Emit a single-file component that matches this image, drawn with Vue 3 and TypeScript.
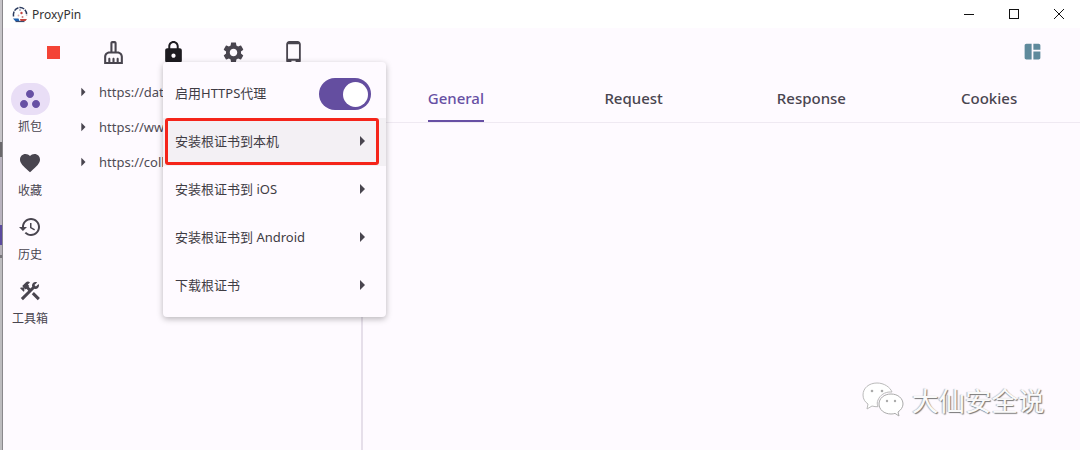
<script setup lang="ts">
const P = {
  broom: 'M16,11h-1V3c0-1.1-0.9-2-2-2h-2C9.9,1,9,1.9,9,3v8H8c-2.76,0-5,2.24-5,5v7h18v-7C21,13.24,18.76,11,16,11z M11,3h2v8h-2V3z M19,21h-2v-3c0-0.55-0.45-1-1-1s-1,0.45-1,1v3h-2v-3c0-0.55-0.45-1-1-1s-1,0.45-1,1v3H9v-3c0-0.55-0.45-1-1-1s-1,0.45-1,1v3H5v-5c0-1.65,1.35-3,3-3h8c1.65,0,3,1.35,3,3V21z',
  lock: 'M18 8h-1V6c0-2.76-2.24-5-5-5S7 3.24 7 6v2H6c-1.1 0-2 .9-2 2v10c0 1.1.9 2 2 2h12c1.1 0 2-.9 2-2V10c0-1.1-.9-2-2-2zm-6 9c-1.1 0-2-.9-2-2s.9-2 2-2 2 .9 2 2-.9 2-2 2zm3.1-9H8.9V6c0-1.71 1.39-3.1 3.1-3.1 1.71 0 3.1 1.39 3.1 3.1v2z',
  gear: 'M19.14 12.94c.04-.3.06-.61.06-.94 0-.32-.02-.64-.07-.94l2.03-1.58c.18-.14.23-.41.12-.61l-1.92-3.32c-.12-.22-.37-.29-.59-.22l-2.39.96c-.5-.38-1.03-.7-1.62-.94l-.36-2.54c-.04-.24-.24-.41-.48-.41h-3.84c-.24 0-.43.17-.47.41l-.36 2.54c-.59.24-1.13.57-1.62.94l-2.39-.96c-.22-.08-.47 0-.59.22L2.74 8.87c-.12.21-.08.47.12.61l2.03 1.58c-.05.3-.09.63-.09.94s.02.64.07.94l-2.03 1.58c-.18.14-.23.41-.12.61l1.92 3.32c.12.22.37.29.59.22l2.39-.96c.5.38 1.03.7 1.62.94l.36 2.54c.05.24.24.41.48.41h3.84c.24 0 .44-.17.47-.41l.36-2.54c.59-.24 1.13-.56 1.62-.94l2.39.96c.22.08.47 0 .59-.22l1.92-3.32c.12-.22.07-.47-.12-.61l-2.01-1.58zM12 15.6c-1.98 0-3.6-1.62-3.6-3.6s1.62-3.6 3.6-3.6 3.6 1.62 3.6 3.6-1.62 3.6-3.6 3.6z',
  phone: 'M16 1H8C6.34 1 5 2.34 5 4v16c0 1.66 1.34 3 3 3h8c1.66 0 3-1.34 3-3V4c0-1.66-1.34-3-3-3zm-2 20h-4v-1h4v1zm3.25-3H6.75V4h10.5v14z',
  dash: 'M11 21H5c-1.1 0-2-.9-2-2V5c0-1.1.9-2 2-2h6v18zm2 0h6c1.1 0 2-.9 2-2v-7h-8v9zm8-11V5c0-1.1-.9-2-2-2h-6v7h8z',
  work: 'M6 13c-2.2 0-4 1.8-4 4s1.8 4 4 4 4-1.8 4-4-1.8-4-4-4zm12 0c-2.2 0-4 1.8-4 4s1.8 4 4 4 4-1.8 4-4-1.8-4-4-4zm-6-10C9.8 3 8 4.8 8 7s1.8 4 4 4 4-1.8 4-4-1.8-4-4-4z',
  heart: 'M12 21.35l-1.45-1.32C5.4 15.36 2 12.28 2 8.5 2 5.42 4.42 3 7.5 3c1.74 0 3.41.81 4.5 2.09C13.09 3.81 14.76 3 16.5 3 19.58 3 22 5.42 22 8.5c0 3.78-3.4 6.86-8.55 11.54L12 21.35z',
  history: 'M13 3c-4.97 0-9 4.03-9 9H1l3.89 3.89.07.14L9 12H6c0-3.87 3.13-7 7-7s7 3.13 7 7-3.13 7-7 7c-1.93 0-3.68-.79-4.94-2.06l-1.42 1.42C8.27 19.99 10.51 21 13 21c4.97 0 9-4.03 9-9s-4.03-9-9-9zm-1 5v5l4.28 2.54.72-1.21-3.5-2.08V8H12z',
  tools: 'M13.783 15.172l2.121-2.121 5.996 5.996-2.121 2.121zM17.5 10c1.93 0 3.5-1.57 3.5-3.5 0-.58-.16-1.12-.41-1.6l-2.7 2.7-1.49-1.49 2.7-2.7c-.48-.25-1.02-.41-1.6-.41C15.57 3 14 4.57 14 6.5c0 .41.08.8.21 1.16l-1.85 1.85-1.78-1.78.71-.71-1.41-1.41L12 3.49c-1.17-1.17-3.07-1.17-4.24 0L4.22 7.03l1.41 1.41H2.81l-.71.71 3.54 3.54.71-.71V9.15l1.41 1.41.71-.71 1.78 1.78-7.41 7.41 2.12 2.12L16.34 9.79c.36.13.75.21 1.16.21z',
  arrow: 'M10 17l5-5-5-5v10z',
}
const tools = [
  { d: P.broom, c: 'ink' },
  { d: P.lock, c: 'black' },
  { d: P.gear, c: 'ink' },
  { d: P.phone, c: 'ink' },
]
const navs = [
  { d: P.work, label: '抓包', active: true },
  { d: P.heart, label: '收藏', active: false },
  { d: P.history, label: '历史', active: false },
  { d: P.tools, label: '工具箱', active: false },
]
const urls = ['https://dat', 'https://www', 'https://coll']
const tabs = ['General', 'Request', 'Response', 'Cookies']
const items = ['安装根证书到本机', '安装根证书到 iOS', '安装根证书到 Android', '下载根证书']
</script>

<template>
  <div class="app">
    <div class="edge">
      <i class="e1"></i><i class="e2"></i><i class="e3"></i><i class="e4"></i><i class="e5"></i><i class="e7"></i><i class="e6"></i>
    </div>
    <div class="main">
      <header class="titlebar">
        <svg class="logo" viewBox="0 0 16 17" width="16" height="17">
          <path d="M1.500 10.500C.8 5.500 3.800 1.500 8 1.500s7 3.600 6.600 8" fill="none" stroke="#2a3a5e" stroke-width="1.500" stroke-dasharray="5 1" />
          <path d="M8 3v2" stroke="#8a8fa5" stroke-width="1.200" />
          <circle cx="9.500" cy="7" r="1.200" fill="#c2443f" />
          <circle cx="6.500" cy="9.500" r=".9" fill="#d9a9a5" />
          <circle cx="10.500" cy="11" r="1" fill="#c9807c" />
          <path d="M1 12.500h5.500l1 2.500H3.200z" fill="#1c5fae" />
          <path d="M8 13h7l-1.500 2H8.500z" fill="#c2443f" />
          <path d="M3.500 15.600h9" stroke="#2a3a5e" stroke-width="1" />
        </svg>
        <span class="app-name">ProxyPin</span>
        <div class="win">
          <svg viewBox="0 0 10 10" width="10" height="10"><path d="M0 5.500h10" stroke="#111" fill="none" /></svg>
          <svg viewBox="0 0 10 10" width="10" height="10"><rect x=".5" y=".5" width="9" height="9" stroke="#111" fill="none" /></svg>
          <svg viewBox="0 0 10 10" width="10" height="10"><path d="M0 0l10 10M10 0L0 10" stroke="#111" fill="none" /></svg>
        </div>
      </header>

      <div class="toolbar">
        <div class="tool"><span class="stop"></span></div>
        <div v-for="t in tools" :key="t.d" class="tool">
          <svg viewBox="0 0 24 24" width="25" height="25" :class="t.c"><path :d="t.d" /></svg>
        </div>
        <svg class="dash" viewBox="0 0 24 24" width="21" height="21"><path :d="P.dash" /></svg>
      </div>

      <div class="body">
        <nav class="nav">
          <div v-for="n in navs" :key="n.label" class="nav-item">
            <span class="pill" :class="{ on: n.active }">
              <svg viewBox="0 0 24 24" width="24" height="24"><path :d="n.d" /></svg>
            </span>
            <span class="nav-label">{{ n.label }}</span>
          </div>
        </nav>

        <section class="tree">
          <div v-for="u in urls" :key="u" class="row">
            <svg viewBox="0 0 24 24" width="20" height="20"><path :d="P.arrow" /></svg>
            <span>{{ u }}</span>
          </div>
        </section>

        <section class="pane">
          <div class="tabs">
            <div v-for="(t, i) in tabs" :key="t" class="tab" :class="{ sel: i === 0 }">
              <span class="tab-text">{{ t }}</span>
            </div>
          </div>
        </section>
      </div>
    </div>

    <div class="menu">
      <div class="switch-row">
        <span class="menu-text">启用HTTPS代理</span>
        <span class="switch"><span class="knob"></span></span>
      </div>
      <div v-for="(m, i) in items" :key="m" class="menu-item" :class="{ hover: i === 0 }">
        <span class="menu-text">{{ m }}</span>
        <svg viewBox="0 0 24 24" width="24" height="24"><path :d="P.arrow" /></svg>
      </div>
    </div>
    <div class="callout"></div>

    <div class="mark">
      <svg viewBox="0 0 44 38" width="44" height="38">
        <path d="M15 1C7 1 1 6 1 13c0 4 2 7 5 9l-1 5 5-3c2 .6 4 .8 6 .7C15 22 15 20 16 18c2-5 7-8 12-8h2C28 5 22 1 15 1z" fill="#fff" stroke="#bbb" />
        <path d="M29 12c-7 0-12 4.500-12 10s5 10 12 10c1.500 0 3-.2 4-.6l4 2.600-1-4c3-2 5-5 5-8 0-5.500-5-10-12-10z" fill="#fff" stroke="#aaa" />
        <circle cx="10" cy="9" r="1.300" fill="#aaa" /><circle cx="20" cy="9" r="1.300" fill="#aaa" />
        <circle cx="25" cy="19" r="1.200" fill="#aaa" /><circle cx="33" cy="19" r="1.200" fill="#aaa" />
      </svg>
      <span>大仙安全说</span>
    </div>
  </div>
</template>

<style>
html, body { margin: 0; background: #fff; overflow: hidden; }
</style>

<style scoped>
.app {
  position: relative;
  width: 1080px;
  height: 450px;
  display: flex;
  overflow: hidden;
  background: #fefaff;
  font-family: "Noto Sans", "Noto Sans CJK SC", sans-serif;
  color: #49454f;
}
.edge { width: 3px; display: flex; flex-direction: column; flex: none; }
.edge i { display: block; box-shadow: inset -1px 0 #8a888c; }
.e1 { height: 142px; background: #c6c4c8; }
.e2 { height: 15px; background: #6a686c; }
.e3 { height: 68px; background: #b9b3bf; }
.e4 { height: 20px; background: #5b4a9e; }
.e5 { height: 10px; background: #b4b0b8; }
.e7 { height: 3px; background: #77757a; }
.e6 { flex: 1; background: #bdbcbf; }

.main { flex: 1; min-width: 0; display: flex; flex-direction: column; }
.titlebar {
  height: 28px;
  flex: none;
  background: #fff;
  display: flex;
  align-items: center;
  padding-left: 9px;
  gap: 4px;
  color: #333;
}
.app-name { font-size: 12px; }
.win { margin-left: auto; display: flex; gap: 35px; padding-right: 16px; }

.toolbar { height: 48px; flex: none; display: flex; align-items: center; padding: 0 37px 1px 20px; box-sizing: border-box; }
.tool { width: 60px; display: flex; justify-content: center; align-items: center; margin-top: 1px; }
.stop { width: 13px; height: 13px; background: #f44336; }
.tool svg { fill: #49454f; }
.tool svg.black { fill: #1d1b20; }
.dash { margin-left: auto; fill: #5f8a9c; }

.body { flex: 1; min-height: 0; display: flex; }
.nav { width: 54px; flex: none; padding-top: 7px; box-sizing: border-box; }
.nav-item { height: 64px; display: flex; flex-direction: column; align-items: center; }
.pill {
  width: 39px;
  height: 32px;
  border-radius: 16px;
  display: flex;
  align-items: center;
  justify-content: center;
  fill: #49454f;
}
.pill.on { background: #e9def6; fill: #6750a4; }
.nav-label { margin-top: 3px; font-size: 12px; line-height: 18px; }

.tree { flex: none; box-sizing: border-box; border-right: 2px solid #e6dfea; width: 306px; }
.row { height: 35px; display: flex; align-items: center; padding-left: 16px; gap: 6px; font-size: 13px; color: #4f4b55; fill: #49454f; white-space: nowrap; }
.row:first-child { margin-top: -2px; }

.pane { flex: 1; min-width: 0; }
.tabs { display: flex; height: 46px; border-bottom: 1px solid #efe9f2; padding: 0 2px 0 4px; }
.tab { flex: 1; display: flex; justify-content: center; }
.tab-text {
  height: 46px;
  line-height: 45px;
  font-size: 15px;
  font-weight: 500;
  color: #49454f;
  box-sizing: border-box;
}
.tab.sel .tab-text { color: #6750a4; border-bottom: 2px solid #6750a4; }

.menu {
  position: absolute;
  left: 163px;
  top: 62px;
  width: 223px;
  height: 255px;
  box-sizing: border-box;
  background: #fefaff;
  border-radius: 4px;
  box-shadow: 0 2px 6px rgba(0, 0, 0, .28);
  font-size: 13px;
  color: #3f3c44;
}
.menu-text { margin-top: -3px; }
.switch-row { height: 56px; display: flex; align-items: center; justify-content: space-between; padding: 8px 15px 0 12px; box-sizing: border-box; }
.switch { width: 52px; height: 32px; border-radius: 16px; background: #644ea0; position: relative; }
.knob { position: absolute; right: 3px; top: 3.500px; width: 25px; height: 25px; border-radius: 50%; background: #fff; }
.menu-item { height: 48px; display: flex; align-items: center; justify-content: space-between; padding: 0 12px; fill: #49454f; box-sizing: border-box; }
.menu-item.hover { background: #f3f0f4; }
.menu-item svg { margin-top: -2px; }
.callout {
  position: absolute;
  left: 165px;
  top: 118px;
  width: 214px;
  height: 47px;
  box-sizing: border-box;
  border: 3px solid #f5241a;
  border-radius: 3px;
}

.mark {
  position: absolute;
  left: 862px;
  top: 379px;
  display: flex;
  align-items: center;
  gap: 6px;
  font-size: 26.500px;
  color: #fafafa;
  text-shadow: 1px 1px 1px #777, -1px 0 1px #bbb;
  line-height: 44px;
}
</style>
